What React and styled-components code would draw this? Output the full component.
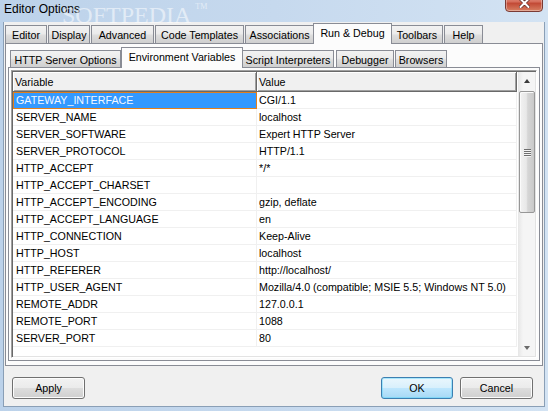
import React from "react";
import styled, { createGlobalStyle, css } from "styled-components";

const GlobalStyle = createGlobalStyle`
  html, body { margin: 0; padding: 0; }
  body {
    width: 548px;
    height: 411px;
    overflow: hidden;
    font-family: "Liberation Sans", Arial, sans-serif;
    font-size: 10.7px;
    color: #000;
  }
  * { box-sizing: border-box; }
`;

const Window = styled.div`
  position: relative;
  width: 548px;
  height: 411px;
  padding: 0 3px 4px 3px;
  display: flex;
  flex-direction: column;
  overflow: hidden;
  background: linear-gradient(90deg, #bcd2ea 0%, #c6d9ee 50%, #d3e3f3 100%);
`;

const TitleBar = styled.div`
  height: 22px;
  display: flex;
  align-items: flex-start;
  justify-content: space-between;
`;

const Title = styled.div`
  margin: 2px 0 0 1px;
  font-size: 12px;
  line-height: 14px;
  color: #000;
`;

const Watermark = styled.div`
  position: absolute;
  left: 62px;
  top: 2px;
  font-family: "Liberation Serif", serif;
  font-size: 24px;
  color: rgba(255, 255, 255, 0.55);
  pointer-events: none;
  sup { font-size: 8px; vertical-align: top; margin-left: 4px; }
`;

const CloseButton = styled.div`
  width: 38px;
  height: 19px;
  margin: -7px 2px 0 0;
  border: 1px solid #7a3b35;
  border-radius: 0 0 4px 4px;
  background: linear-gradient(180deg, #e9a99a 0%, #d66e5c 45%, #c24a36 55%, #d77f62 100%);
  box-shadow: inset 0 0 0 1px rgba(255, 255, 255, 0.35);
  display: flex;
  align-items: center;
  justify-content: center;
`;

const Client = styled.div`
  flex: 1;
  display: flex;
  flex-direction: column;
  padding-top: 1px;
  background: #f0f0f0;
  border: 1px solid #8a9fb6;
  border-top: none;
`;

const TabControl = styled.div`
  display: flex;
  flex-direction: column;
  height: ${(p) => p.$height};
  margin: ${(p) => p.$margin || "0"};
  flex: ${(p) => (p.$grow ? 1 : "none")};
`;

const TabStrip = styled.div`
  height: 20px;
  display: flex;
  align-items: flex-end;
  padding-left: ${(p) => p.$indent || 0}px;
  position: relative;
  z-index: 1;
`;

const Tab = styled.div`
  width: ${(p) => p.$w}px;
  margin-left: ${(p) => p.$ml || 0}px;
  height: ${(p) => (p.$small ? 17 : 18)}px;
  padding-top: 1px;
  border: 1px solid #898c95;
  border-bottom: none;
  background: linear-gradient(180deg, #f2f2f2 0%, #ebebeb 45%, #dddddd 55%, #cfcfcf 100%);
  display: flex;
  align-items: center;
  justify-content: center;
  white-space: nowrap;
  ${(p) =>
    p.$active &&
    css`
      height: 21px;
      margin-bottom: -1px;
      padding-top: 0;
      padding-bottom: 2px;
      background: #fcfcfc;
      position: relative;
      z-index: 2;
    `}
`;

const Panel = styled.div`
  flex: 1;
  display: flex;
  flex-direction: column;
  border: 1px solid #898c95;
  background: #fcfcfc;
  padding: ${(p) => p.$pad};
`;

const ListView = styled.div`
  flex: 1;
  display: flex;
  background: #fff;
  border: 1px solid;
  border-color: #a0a0a0 #ffffff #ffffff #a0a0a0;
  box-shadow: inset 1px 1px 0 #696969, inset -1px -1px 0 #e3e3e3;
  padding: 1px;
`;

const Grid = styled.div`
  flex: 1;
  display: flex;
  flex-direction: column;
  min-width: 0;
`;

const HeaderRow = styled.div`
  display: grid;
  grid-template-columns: 244px 260px;
  height: 20px;
`;

const HeaderCell = styled.div`
  display: flex;
  align-items: center;
  padding-left: 2px;
  background: #f0f0f0;
  border-right: 1px solid #696969;
  border-bottom: 1px solid #696969;
  box-shadow: inset 1px 1px 0 #ffffff, inset -1px -1px 0 #a0a0a0;
`;

const Row = styled.div`
  display: grid;
  grid-template-columns: 244px 260px;
  height: 17px;
`;

const Cell = styled.div`
  padding-left: ${(p) => p.$pad}px;
  line-height: 16px;
  white-space: nowrap;
  overflow: hidden;
  border-right: 1px solid #f0f0f0;
  border-bottom: 1px solid #f0f0f0;
  ${(p) =>
    p.$selected &&
    css`
      background: #3399ff;
      color: #f4f8ff;
      border: 1px solid #e0801e;
      padding-left: ${p.$pad - 1}px;
      line-height: 15px;
    `}
`;

const ScrollBar = styled.div`
  width: 17px;
  margin-left: 1px;
  display: flex;
  flex-direction: column;
  background: linear-gradient(90deg, #e6e6e6 0%, #f5f5f5 30%, #f5f5f5 100%);
`;

const ArrowButton = styled.div`
  height: 17px;
  display: flex;
  align-items: center;
  justify-content: center;
  &::after {
    content: "";
    width: 0;
    height: 0;
    border-left: 3.5px solid transparent;
    border-right: 3.5px solid transparent;
    ${(p) =>
      p.$down
        ? "border-top: 4px solid #6a6a6a;"
        : "border-bottom: 4px solid #3c3c3c;"}
  }
`;

const Thumb = styled.div`
  height: 122px;
  margin: 2px 0 0 1px;
  border: 1px solid #979797;
  border-radius: 2px;
  background: linear-gradient(90deg, #f2f2f2 0%, #e8e8e8 45%, #d6d6d6 55%, #c9c9c9 100%);
  box-shadow: inset 1px 1px 0 #fbfbfb;
  display: flex;
  flex-direction: column;
  align-items: center;
  justify-content: center;
  gap: 1px;
`;

const GripLine = styled.div`
  width: 7px;
  height: 1px;
  background: #6f6f6f;
  box-shadow: 0 1px 0 #f4f4f4;
`;

const Track = styled.div`
  flex: 1;
`;

const ButtonRow = styled.div`
  display: flex;
  align-items: center;
  margin-top: 11px;
  padding: 0 11px 0 8px;
  gap: 7px;
  height: 22px;
`;

const Spacer = styled.div`
  flex: 1;
`;

const Button = styled.div`
  width: ${(p) => p.$w}px;
  height: 22px;
  border: 1px solid #707070;
  border-radius: 3px;
  background: linear-gradient(180deg, #f2f2f2 0%, #ebebeb 48%, #dddddd 52%, #cfcfcf 100%);
  box-shadow: inset 0 0 0 1px #fcfcfc;
  display: flex;
  align-items: center;
  justify-content: center;
  ${(p) =>
    p.$default &&
    css`
      border-color: #3c7fb1;
      background: linear-gradient(180deg, #eaf6fd 0%, #d9f0fc 48%, #bee6fd 52%, #a7d9f5 100%);
      box-shadow: inset 0 0 0 1px #48d2fb66;
    `}
`;

const mainTabs = [
  { label: "Editor", w: 42 },
  { label: "Display", w: 42, ml: 1 },
  { label: "Advanced", w: 63, ml: 1 },
  { label: "Code Templates", w: 89, ml: 1 },
  { label: "Associations", w: 69, ml: 1 },
  { label: "Run & Debug", w: 79, ml: -1, active: true },
  { label: "Toolbars", w: 52, ml: -1 },
  { label: "Help", w: 39, ml: 1 },
];

const subTabs = [
  { label: "HTTP Server Options", w: 111 },
  { label: "Environment Variables", w: 122, active: true },
  { label: "Script Interpreters", w: 92, ml: -1 },
  { label: "Debugger", w: 58, ml: 2 },
  { label: "Browsers", w: 52, ml: 1 },
];

const variables = [
  ["GATEWAY_INTERFACE", "CGI/1.1"],
  ["SERVER_NAME", "localhost"],
  ["SERVER_SOFTWARE", "Expert HTTP Server"],
  ["SERVER_PROTOCOL", "HTTP/1.1"],
  ["HTTP_ACCEPT", "*/*"],
  ["HTTP_ACCEPT_CHARSET", ""],
  ["HTTP_ACCEPT_ENCODING", "gzip, deflate"],
  ["HTTP_ACCEPT_LANGUAGE", "en"],
  ["HTTP_CONNECTION", "Keep-Alive"],
  ["HTTP_HOST", "localhost"],
  ["HTTP_REFERER", "http://localhost/"],
  ["HTTP_USER_AGENT", "Mozilla/4.0 (compatible; MSIE 5.5; Windows NT 5.0)"],
  ["REMOTE_ADDR", "127.0.0.1"],
  ["REMOTE_PORT", "1088"],
  ["SERVER_PORT", "80"],
];

function Tabs({ items, small, indent }) {
  return (
    <TabStrip $indent={indent}>
      {items.map((t) => (
        <Tab key={t.label} $w={t.w} $ml={t.ml} $active={t.active} $small={small}>
          {t.label}
        </Tab>
      ))}
    </TabStrip>
  );
}

function VariableList() {
  return (
    <ListView>
      <Grid>
        <HeaderRow>
          <HeaderCell>Variable</HeaderCell>
          <HeaderCell>Value</HeaderCell>
        </HeaderRow>
        {variables.map(([name, value], i) => (
          <Row key={name}>
            <Cell $pad={3} $selected={i === 0}>{name}</Cell>
            <Cell $pad={2}>{value}</Cell>
          </Row>
        ))}
      </Grid>
      <ScrollBar>
        <ArrowButton />
        <Thumb>
          <GripLine />
          <GripLine />
          <GripLine />
          <GripLine />
        </Thumb>
        <Track />
        <ArrowButton $down />
      </ScrollBar>
    </ListView>
  );
}

export default function App() {
  return (
    <>
      <GlobalStyle />
      <Window>
        <TitleBar>
          <Title>Editor Options</Title>
          <CloseButton>
            <svg width="11" height="10" viewBox="0 0 11 10">
              <path
                d="M1.5 1 L9.5 9 M9.5 1 L1.5 9"
                stroke="#5a2a25"
                strokeWidth="3.4"
                strokeLinecap="round"
              />
              <path
                d="M1.5 1 L9.5 9 M9.5 1 L1.5 9"
                stroke="#ffffff"
                strokeWidth="2"
                strokeLinecap="round"
              />
            </svg>
          </CloseButton>
        </TitleBar>
        <Watermark>
          SOFTPEDIA<sup>TM</sup>
        </Watermark>
        <Client>
          <TabControl $height="343px" $margin="0 1px">
            <Tabs items={mainTabs} />
            <Panel $pad="3px 2px 4px 2px">
              <TabControl $grow>
                <Tabs items={subTabs} small indent={2} />
                <Panel $pad="2px">
                  <VariableList />
                </Panel>
              </TabControl>
            </Panel>
          </TabControl>
          <ButtonRow>
            <Button $w={73}>Apply</Button>
            <Spacer />
            <Button $w={72} $default>OK</Button>
            <Button $w={73}>Cancel</Button>
          </ButtonRow>
        </Client>
      </Window>
    </>
  );
}
